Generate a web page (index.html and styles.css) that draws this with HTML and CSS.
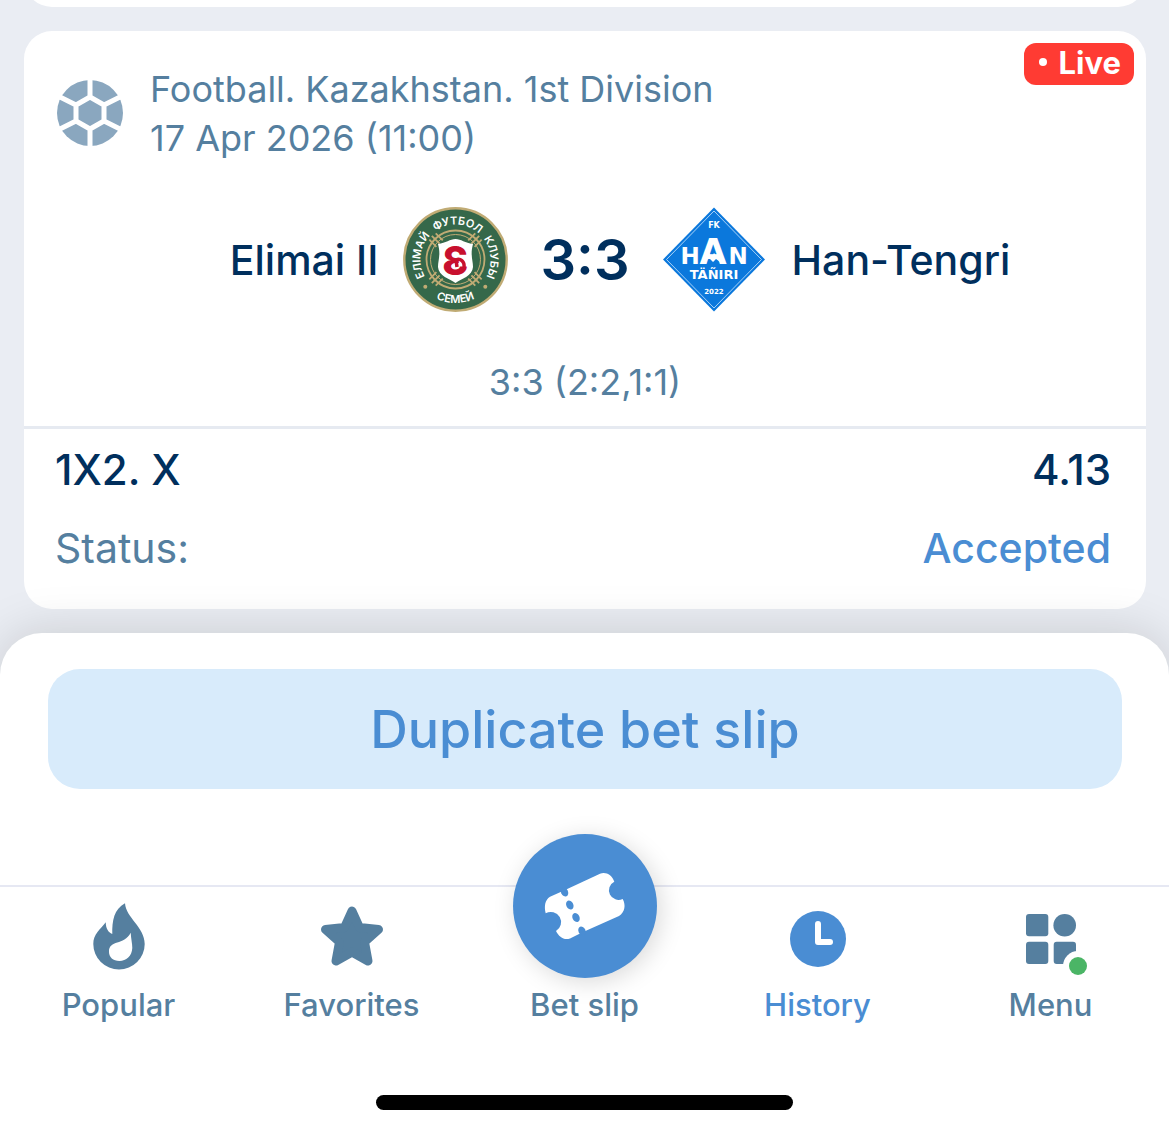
FILE: index.html
```html
<!DOCTYPE html>
<html lang="en">
<head>
    <meta charset="UTF-8">
    <meta name="viewport" content="width=device-width, initial-scale=1.0">
    <title>Bet History</title>
    <link rel="stylesheet" href="styles.css">
</head>
<body>
    <main class="feed">
        <div class="card card-previous"></div>

        <article class="card">
            <span class="live-badge"><span class="live-dot"></span>Live</span>

            <header class="event-header">
                <svg class="sport-icon" viewBox="0 0 68 68" aria-hidden="true">
                    <circle cx="34" cy="33" r="33" fill="#8aa7bf"/>
                    <path d="M34 17 L48 25 V41 L34 49 L20 41 V25 Z M34 17 V-2 M48 25 L66 16 M48 41 L66 50 M34 49 V68 M20 41 L2 50 M20 25 L2 16" fill="none" stroke="#fff" stroke-width="5" stroke-linejoin="round"/>
                </svg>
                <div class="event-info">
                    <p>Football. Kazakhstan. 1st Division</p>
                    <p>17 Apr 2026 (11:00)</p>
                </div>
            </header>

            <div class="teams">
                <div class="team team-home">
                    <span>Elimai II</span>
                    <svg class="crest" viewBox="0 0 105 105" aria-hidden="true">
                        <defs>
                            <path id="ring-top" d="M52.5 87.5 A35 35 0 0 1 52.5 17.5 A35 35 0 0 1 52.5 87.5"/>
                            <path id="ring-bottom" d="M9 52.5 A43.5 43.5 0 0 0 96 52.5"/>
                            <g id="rope">
                                <path d="M48 20 V30 M52.5 19 V30 M57 20 V30"/>
                            </g>
                        </defs>
                        <circle cx="52.5" cy="52.5" r="51.2" fill="#35684a" stroke="#c0ab74" stroke-width="2.4"/>
                        <g fill="none" stroke="#c0ab74" stroke-width="1.8">
                            <circle cx="52.5" cy="52.5" r="29"/>
                            <circle cx="52.5" cy="52.5" r="25" stroke-width="1"/>
                            <use href="#rope" transform="rotate(45 52.5 52.5)"/>
                            <use href="#rope" transform="rotate(135 52.5 52.5)"/>
                            <use href="#rope" transform="rotate(225 52.5 52.5)"/>
                            <use href="#rope" transform="rotate(315 52.5 52.5)"/>
                        </g>
                        <path d="M35 37 C43 36 47 32 52.500 32 C58 32 62 36 70 37 C67 48 70 53 70 60 C69.500 69 58 72 52.500 76 C47 72 35.500 69 35 60 C35 53 38 48 35 37 Z" fill="#fff"/>
                        <text class="crest-letter" x="52.500" y="68" text-anchor="middle">&#400;</text>
                        <path d="M61 61 C62 54 57 51 53 53 L54 60" fill="none" stroke="#c8102e" stroke-width="3.500"/>
                        <circle cx="22.300" cy="79.700" r="2" fill="#c0ab74"/>
                        <circle cx="82.300" cy="79.700" r="2" fill="#c0ab74"/>
                        <g class="crest-text" text-anchor="middle">
                            <text><textPath href="#ring-top" startOffset="27%">ЕЛІМАЙ</textPath></text>
                            <text><textPath href="#ring-top" startOffset="51%">ФУТБОЛ</textPath></text>
                            <text><textPath href="#ring-top" startOffset="74%">КЛУБЫ</textPath></text>
                            <text><textPath href="#ring-bottom" startOffset="50%">СЕМЕЙ</textPath></text>
                        </g>
                    </svg>
                </div>
                <strong class="score">3:3</strong>
                <div class="team">
                    <svg class="crest" viewBox="0 0 105 105" aria-hidden="true">
                        <path d="M52 .5 L103 52.500 L52 104.500 L1 52.500 Z" fill="#0b78dc"/>
                        <path d="M52 4 L99.500 52.500 L52 101 L4.500 52.500 Z" fill="none" stroke="#a9d2f7" stroke-width="1"/>
                        <g class="han-text" text-anchor="middle">
                            <text x="52" y="21" font-size="8">FK</text>
                            <text x="28" y="57" font-size="23">H</text>
                            <text x="51" y="57" font-size="35">A</text>
                            <text x="76" y="57" font-size="23">N</text>
                            <text x="52" y="72" font-size="13">TÄÑIRI</text>
                            <text x="52" y="87" font-size="7">2022</text>
                        </g>
                        <path d="M40 57 L47 46 L50 50 L52 46 L61 57 L54 52 L51 55 L47 51 Z" fill="#fff"/>
                    </svg>
                    <span>Han-Tengri</span>
                </div>
            </div>

            <p class="score-detail">3:3 (2:2,1:1)</p>

            <dl class="bet">
                <div class="bet-row">
                    <dt>1X2. X</dt>
                    <dd>4.13</dd>
                </div>
                <div class="bet-row bet-status">
                    <dt>Status:</dt>
                    <dd>Accepted</dd>
                </div>
            </dl>
        </article>
    </main>

    <footer class="sheet">
        <div class="actions">
            <button type="button" class="duplicate-btn">Duplicate bet slip</button>
        </div>

        <nav class="tabbar">
            <a href="#" class="tab">
                <svg class="tab-icon" viewBox="0 0 72 72" aria-hidden="true">
                    <g transform="translate(9 0)">
                        <path d="M33 .3 C34 15 52.700 24 52.700 41 A25.700 25.500 0 0 1 1.300 41 C1.300 31 8 27 13.700 19.300 C14 26 16 29 20.300 31 C20 18 22 6 33 .3 Z" fill="currentColor"/>
                        <path d="M38.700 29.700 C39 36 40.300 40 40.300 45 C40 53 34 58 27.500 58 C21 58 17 54 17 49 C17 36 32 43 38.700 29.700 Z" fill="#fff"/>
                    </g>
                </svg>
                <span>Popular</span>
            </a>
            <a href="#" class="tab">
                <svg class="tab-icon" viewBox="0 0 72 72" aria-hidden="true">
                    <path transform="translate(4 2)" d="M32 6 L39.500 22.500 L58.500 24.500 L44.500 37 L48 56 L32 47 L16 56 L19.500 37 L5.500 24.500 L24.500 22.500 Z" fill="currentColor" stroke="currentColor" stroke-width="9" stroke-linejoin="round"/>
                </svg>
                <span>Favorites</span>
            </a>
            <a href="#" class="tab">
                <span class="tab-circle">
                    <svg viewBox="0 0 144 144" aria-hidden="true">
                        <path d="M37 62.700 L51 56.400 L87 39.700 C93 37.500 99 41 101.300 47.700 A9.500 9.500 0 0 0 109.700 64.900 C113 71 112 78 106 82 L69 98.500 L57 104.500 C51 106.500 46 103 43 97 A9.500 9.500 0 0 0 32.700 79.300 C31 72 32 66 37 62.700 Z" fill="#fff"/>
                        <g fill="#4a8dd3">
                            <ellipse cx="51.500" cy="58" rx="3.500" ry="4.800" transform="rotate(-25 51.500 58)"/>
                            <ellipse cx="56.800" cy="71" rx="3.500" ry="4.800" transform="rotate(-25 56.800 71)"/>
                            <ellipse cx="63" cy="83.500" rx="3.500" ry="4.800" transform="rotate(-25 63 83.500)"/>
                            <ellipse cx="69" cy="97" rx="3.500" ry="4.800" transform="rotate(-25 69 97)"/>
                        </g>
                    </svg>
                </span>
                <span>Bet slip</span>
            </a>
            <a href="#" class="tab tab-active">
                <svg class="tab-icon" viewBox="0 0 72 72" aria-hidden="true">
                    <circle cx="36" cy="36" r="28" fill="currentColor"/>
                    <path d="M36 21 V39 H48" fill="none" stroke="#fff" stroke-width="6" stroke-linecap="round" stroke-linejoin="round"/>
                </svg>
                <span>History</span>
            </a>
            <a href="#" class="tab">
                <svg class="tab-icon" viewBox="0 0 72 72" aria-hidden="true">
                    <g fill="currentColor">
                        <rect x="11" y="11" width="22.300" height="22.300" rx="3"/>
                        <circle cx="49.700" cy="22.300" r="11.300"/>
                        <rect x="11" y="38.700" width="22.300" height="22.300" rx="3"/>
                        <rect x="38.700" y="38.700" width="22.300" height="22.300" rx="3"/>
                    </g>
                    <circle cx="63" cy="63" r="15" fill="#fff"/>
                    <circle cx="63" cy="63" r="9" fill="#4bb566"/>
                </svg>
                <span>Menu</span>
            </a>
        </nav>

        <div class="home-indicator"></div>
    </footer>
</body>
</html>
```
FILE: styles.css
```css
* {
    margin: 0;
    padding: 0;
    box-sizing: border-box;
}

body {
    min-height: 100vh;
    display: flex;
    flex-direction: column;
    background-color: #eaedf3;
    font-family: Inter, "Liberation Sans", sans-serif;
    color: #002f5d;
    overflow-x: hidden;
}

/* Bet cards */
.feed {
    padding: 0 23px 24px 24px;
    overflow: hidden;
}

.card {
    position: relative;
    background-color: #fff;
    border-radius: 28px;
}

.card-previous {
    height: 64px;
    margin-top: -57px;
    margin-bottom: 24px;
}

.live-badge {
    position: absolute;
    top: 12px;
    right: 12px;
    display: flex;
    align-items: center;
    gap: 12px;
    height: 42px;
    padding: 0 13px 4px 15px;
    border-radius: 12px;
    background-color: #ff3b33;
    color: #fff;
    font-size: 31px;
    font-weight: 700;
}

.live-dot {
    width: 8px;
    height: 8px;
    border-radius: 50%;
    background-color: #fff;
}

.event-header {
    display: flex;
    align-items: center;
    gap: 26px;
    padding: 34px 32px 0;
    font-size: 36px;
    line-height: 49px;
    color: #557f9f;
}

.sport-icon {
    width: 68px;
    height: 68px;
    flex: none;
}

.teams {
    display: grid;
    grid-template-columns: 1fr auto 1fr;
    align-items: center;
    gap: 32px;
    margin-top: 44px;
}

.team {
    display: flex;
    align-items: center;
    gap: 25px;
    font-size: 41px;
    font-weight: 500;
}

.team-home {
    justify-content: flex-end;
}

.crest {
    width: 105px;
    height: 105px;
    flex: none;
}

.crest-text {
    font-size: 11px;
    font-weight: 600;
    fill: #fff;
}

.crest-letter {
    font-size: 40px;
    font-weight: 800;
    fill: #c8102e;
}

.han-text {
    font-family: "DejaVu Sans", sans-serif;
    font-weight: 700;
    fill: #fff;
}

.score {
    font-size: 56px;
    font-weight: 600;
}

.score-detail {
    padding: 48px 32px 22px;
    border-bottom: 3px solid #e6eaf1;
    font-size: 36px;
    line-height: 44px;
    text-align: center;
    color: #557f9f;
}

.bet {
    display: flex;
    flex-direction: column;
    gap: 26px;
    padding: 15px 35px 35px 31px;
}

.bet-row {
    display: flex;
    justify-content: space-between;
    font-size: 42px;
    font-weight: 500;
    line-height: 52px;
}

.bet-status {
    font-size: 41px;
}

.bet-status dt {
    font-weight: 400;
    color: #557f9f;
}

.bet-status dd {
    color: #4a8dd3;
}

/* Bottom sheet */
.sheet {
    position: relative;
    flex: 1;
    background-color: #fff;
    border-radius: 42px 42px 0 0;
    box-shadow: 0 0 50px rgba(0, 0, 0, 0.15);
}

.actions {
    padding: 36px 47px 96px 48px;
}

.duplicate-btn {
    display: block;
    width: 100%;
    height: 120px;
    border: none;
    border-radius: 32px;
    background-color: #d8ebfb;
    color: #4a8dd3;
    font-family: inherit;
    font-size: 52px;
    font-weight: 500;
    cursor: pointer;
}

.tabbar {
    display: grid;
    grid-template-columns: repeat(5, 1fr);
    padding: 16px 2px 0;
    border-top: 2px solid #e6e8f3;
}

.tab {
    display: flex;
    flex-direction: column;
    align-items: center;
    justify-content: flex-end;
    gap: 12px;
    color: #557f9f;
    font-size: 31px;
    font-weight: 500;
    line-height: 36px;
    text-decoration: none;
}

.tab-active {
    color: #4a8dd3;
}

.tab-icon {
    width: 72px;
    height: 72px;
    overflow: visible;
}

.tab-circle {
    width: 144px;
    height: 144px;
    margin: -69px 0 -3px;
    border-radius: 50%;
    background-color: #4a8dd3;
    box-shadow: 4px 4px 24px rgba(0, 0, 0, 0.15);
}

.home-indicator {
    width: 417px;
    max-width: 80%;
    height: 15px;
    margin: 72px auto 23px;
    border-radius: 8px;
    background-color: #000;
}
```
